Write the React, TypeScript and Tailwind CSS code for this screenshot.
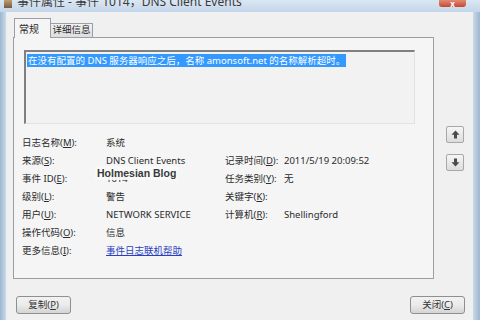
const font = { fontFamily: '"Noto Sans", "Noto Sans CJK SC", sans-serif' }

type Field = { label: string; key: string; value?: React.ReactNode }

function Label({ text, k }: { text: string; k: string }) {
	return (
		<span className="whitespace-nowrap">
			{text}(<u>{k}</u>):
		</span>
	)
}

function ArrowButton({ up }: { up: boolean }) {
	return (
		<div className="flex h-[17px] w-[18px] items-center justify-center rounded-[2px] border border-[#a8a8a8] bg-gradient-to-b from-[#f6f6f6] to-[#dcdcdc]">
			<svg width="9" height="9" viewBox="0 0 9 9" className={up ? '' : 'rotate-180'}>
				<path d="M4.5 0.5 L8.5 4.8 L6 4.8 L6 8.5 L3 8.5 L3 4.8 L0.5 4.8 Z" fill="#4a4a4a" />
			</svg>
		</div>
	)
}

function Button({ children }: { children: React.ReactNode }) {
	return (
		<div className="flex h-[18px] w-[55px] items-center justify-center rounded-[3px] border border-[#8e8f8f] bg-gradient-to-b from-[#f2f2f2] via-[#ebebeb] to-[#d4d4d4] text-[9.5px] text-[#333]">
			{children}
		</div>
	)
}

export default function App() {
	const left: Field[] = [
		{ label: '日志名称', key: 'M', value: '系统' },
		{ label: '来源', key: 'S', value: 'DNS Client Events' },
		{ label: '事件 ID', key: 'E', value: '1014' },
		{ label: '级别', key: 'L', value: '警告' },
		{ label: '用户', key: 'U', value: 'NETWORK SERVICE' },
		{ label: '操作代码', key: 'O', value: '信息' },
		{
			label: '更多信息',
			key: 'I',
			value: <span className="text-[#2a3fc0] underline">事件日志联机帮助</span>,
		},
	]
	const right: (Field | null)[] = [
		null,
		{ label: '记录时间', key: 'D', value: '2011/5/19 20:09:52' },
		{ label: '任务类别', key: 'Y', value: '无' },
		{ label: '关键字', key: 'K' },
		{ label: '计算机', key: 'R', value: 'Shellingford' },
		null,
		null,
	]

	return (
		<div className="flex h-[320px] w-[480px] flex-col overflow-hidden bg-[#b4cce4] text-[10px] text-[#2b2b2b]" style={font}>
			{/* title bar */}
			<div className="flex h-[12px] shrink-0 items-start bg-gradient-to-b from-[#dbe7f3] to-[#c3d6ea]">
				<div className="ml-[4px] h-[8px] w-[8px] bg-gradient-to-b from-[#c0a070] to-[#7a5a40]" />
				<div className="-mt-[6px] ml-[5px] text-[12px] leading-[16px] text-[#3a3a3a]">
					事件属性 - 事件 1014，DNS Client Events
				</div>
				<div className="ml-auto mr-[14px] flex h-[7px] w-[27px] items-end justify-center rounded-b-[3px] bg-gradient-to-b from-[#e08a74] to-[#c6452f]">
					<span className="text-[8px] leading-[6px] font-bold text-white">x</span>
				</div>
			</div>

			<div className="flex flex-1">
				<div className="w-[6px] bg-gradient-to-r from-[#9db6cf] to-[#c9daea]" />

				{/* client area */}
				<div className="flex w-[467px] flex-col bg-[#f0f0f0]">
					{/* tabs */}
					<div className="flex items-end pl-[8px] pt-[6px]">
						<div className="relative z-10 -mb-px flex h-[20px] w-[37px] items-start border border-b-0 border-[#9a9ea6] bg-[#f5f5f5] pl-[4px] pt-[3px] text-[10px]">
							常规
						</div>
						<div className="flex h-[14px] w-[42px] items-center justify-center border border-b-0 border-l-0 border-[#9a9ea6] bg-gradient-to-b from-[#f0f0f0] to-[#dedede] text-[9.5px]">
							详细信息
						</div>
					</div>

					<div className="flex">
						{/* panel */}
						<div className="relative ml-[7px] h-[242px] w-[421px] border border-[#9a9ea6] bg-[#f5f5f5]">
							<div className="ml-[10px] mt-[12px] h-[74px] w-[391px] border-b border-l-2 border-r border-t-2 border-b-[#e2e2e2] border-l-[#808080] border-r-[#e2e2e2] border-t-[#808080] bg-[#f2f2f2] pl-[1px] pt-px">
								<span className="inline-block bg-[#3399ff] px-[1px] text-[9.5px] leading-[13px] text-white">
									在没有配置的 DNS 服务器响应之后，名称 amonsoft.net 的名称解析超时。
								</span>
							</div>

							<div className="mt-[10px] grid grid-cols-[84px_119px_59px_1fr] pl-[8px] text-[9.5px] leading-[18px]">
								{left.map((f, i) => {
									const r = right[i]
									return (
										<div key={f.key} className="contents">
											<Label text={f.label} k={f.key} />
											<span>{f.value}</span>
											{r ? <Label text={r.label} k={r.key} /> : <span />}
											<span>{r?.value ?? ''}</span>
										</div>
									)
								})}
							</div>

							{/* watermark */}
							<div
								className="absolute left-[81px] top-[128px] bg-[#fafafa]/90 px-[2px] text-[10.5px] font-bold leading-[14px] text-[#3a3a3a]"
								style={{ fontFamily: '"Liberation Sans", sans-serif' }}
							>
								Holmesian Blog
							</div>
						</div>

						{/* side arrows */}
						<div className="ml-[12px] flex flex-col gap-[11px] pt-[89px]">
							<ArrowButton up />
							<ArrowButton up={false} />
						</div>
					</div>

					{/* bottom buttons */}
					<div className="mt-[17px] flex justify-between pl-[10px] pr-[8px]">
						<Button>
							复制(<u>P</u>)
						</Button>
						<Button>
							关闭(<u>C</u>)
						</Button>
					</div>
				</div>

				<div className="flex-1 bg-gradient-to-r from-[#c9daea] to-[#9db6cf]" />
			</div>
		</div>
	)
}
